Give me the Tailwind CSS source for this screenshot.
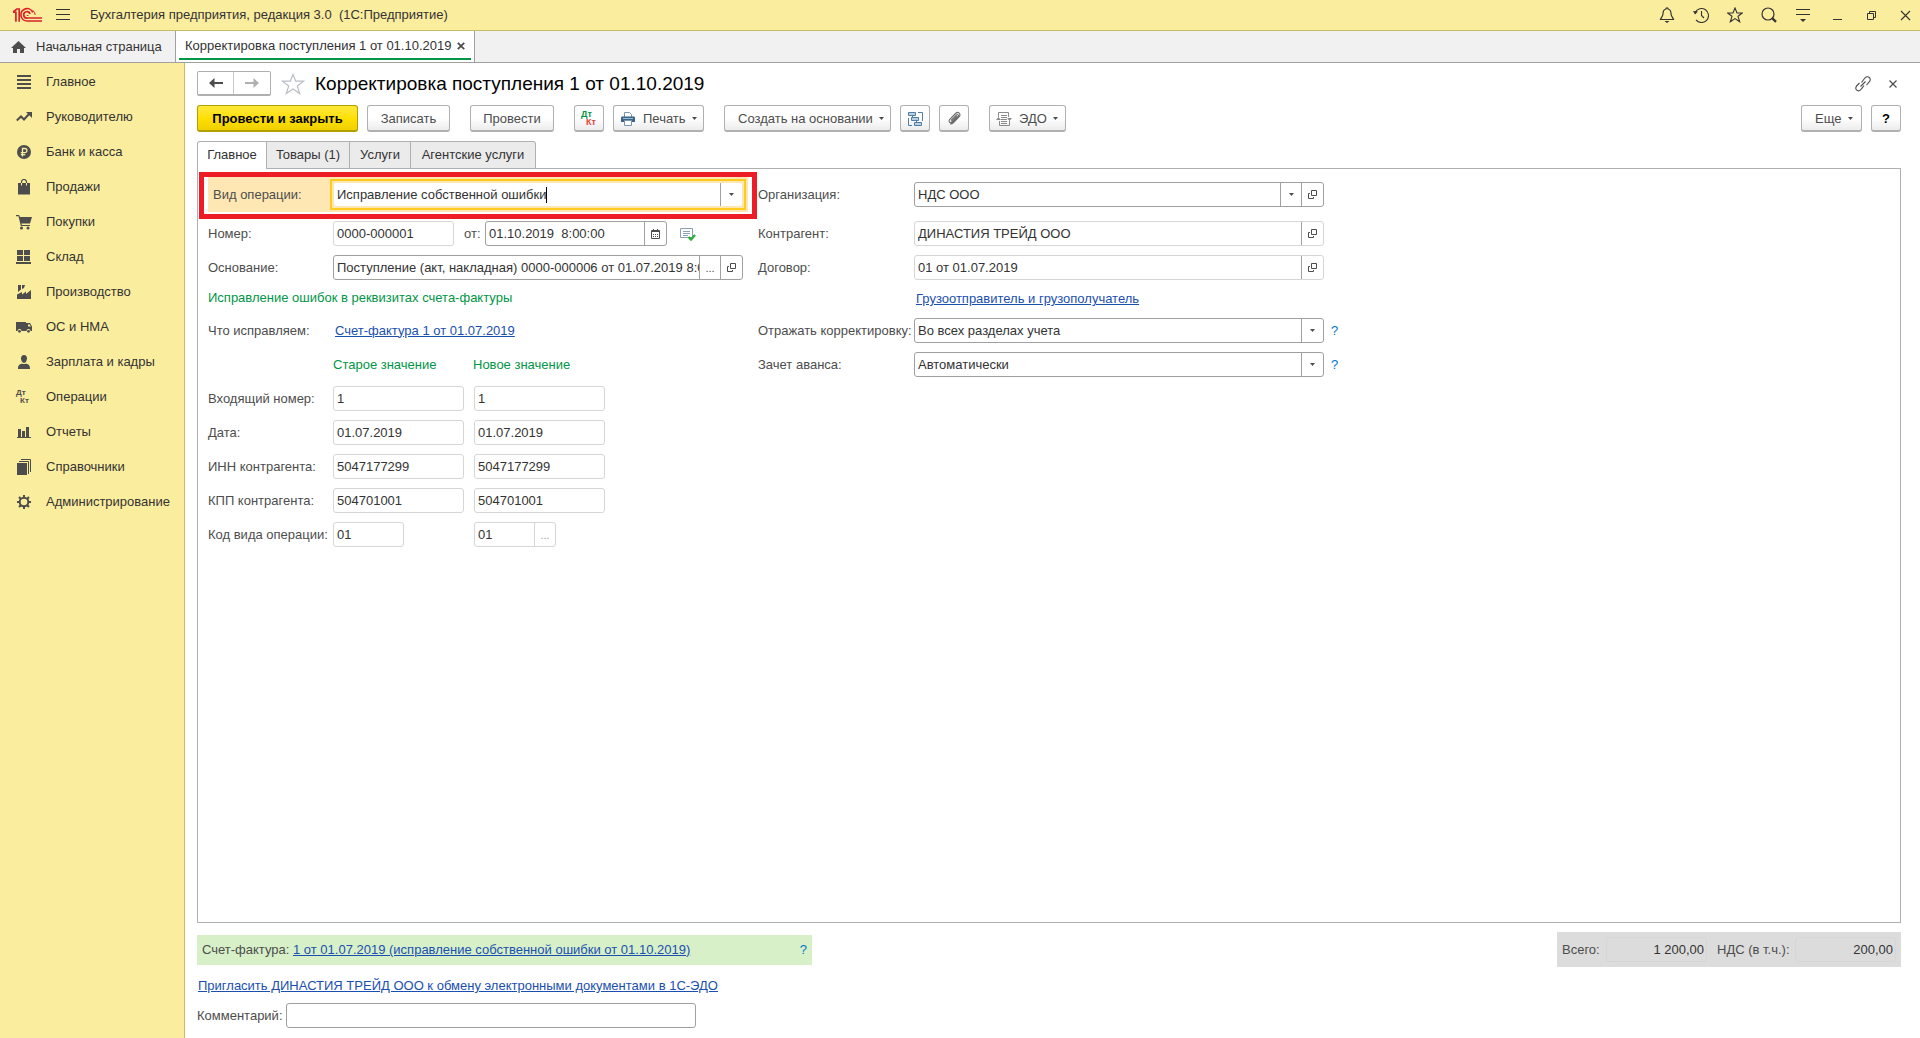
<!DOCTYPE html>
<html lang="ru">
<head>
    <meta charset="UTF-8">
    <meta name="viewport" content="width=device-width, initial-scale=1.0">
    <title>Корректировка поступления 1 от 01.10.2019</title>
    <script src="https://cdn.jsdelivr.net/npm/@tailwindcss/browser@4"></script>
</head>
<body class="flex flex-col min-h-screen bg-white text-[13px] leading-4 text-[#333333] font-['Liberation_Sans',Arial,sans-serif]">

    <!-- Title bar -->
    <header class="flex items-center h-[31px] pl-3 pr-[3px] bg-[#fbed9e] border-b border-[#c8bb62]">
        <svg class="w-[30px] h-4" viewBox="0 0 30 16" fill="none" stroke="#d8232a" stroke-width="1.7">
            <path d="M1 5.2h2.4M3.9 4.4v10.400M1.200 5l3.600-3h2.400v12.800"/>
            <path d="M20.8 5.4A6.2 6.2 0 1 0 15.5 14H30"/>
            <path d="M18 7A3.2 3.2 0 1 0 15.5 11H30"/>
            <path d="M16.5 8.4h-1.8M23.2 8A7.8 7.8 0 0 0 21 3.4" stroke-width="1"/>
        </svg>
        <button class="ml-[14px]" aria-label="Меню">
            <svg class="w-[14px] h-3" viewBox="0 0 14 12" stroke="#333" fill="none"><path d="M0 .5h14M0 5.5h14M0 10.5h14"/></svg>
        </button>
        <h1 class="ml-5 flex-1 whitespace-pre">Бухгалтерия предприятия, редакция 3.0  (1С:Предприятие)</h1>
        <div class="flex gap-[10px]">
            <button class="w-6 h-6 flex items-center justify-center" aria-label="Уведомления">
                <svg class="size-4" viewBox="0 0 16 16" fill="none" stroke="#333" stroke-width="1.2"><path d="M8 .8c-.8 0-1.1.5-1.1 1.2C4.7 2.6 4 4.3 4 6.5 4 9.5 2.3 10 1.5 12.5h13C13.700 10 12 9.5 12 6.5 12 4.3 11.3 2.6 9.1 2 9.1 1.3 8.8.8 8 .8z"/><path d="M5.5 14h5L8 16z" fill="#333" stroke="none"/></svg>
            </button>
            <button class="w-6 h-6 flex items-center justify-center" aria-label="История">
                <svg class="size-4" viewBox="0 0 16 16" fill="none" stroke="#333" stroke-width="1.1"><path d="M2.2 5.5A7 7 0 1 1 3 12.8M8.5 4v4.5L11 11"/><path d="M0 4l5 .5-3 3z" fill="#333" stroke="none"/></svg>
            </button>
            <button class="w-6 h-6 flex items-center justify-center" aria-label="Избранное">
                <svg class="size-4" viewBox="0 0 16 16" fill="none" stroke="#333" stroke-width="1.1"><path d="M8 1l2 5h5.3L11 9.3l1.7 5.5L8 11.6l-4.7 3.2L5 9.3.7 6H6z"/></svg>
            </button>
            <button class="w-6 h-6 flex items-center justify-center" aria-label="Поиск">
                <svg class="size-4" viewBox="0 0 16 16" fill="none" stroke="#333" stroke-width="1.2"><circle cx="7" cy="7" r="6"/><path d="M11 11l4 3.8" stroke-width="2.4"/></svg>
            </button>
            <button class="w-6 h-6 flex items-center justify-center" aria-label="Сервис">
                <svg class="size-4" viewBox="0 0 16 16" fill="none" stroke="#333"><path d="M1 2.5h14M1 7.5h14"/><path d="M5 12h6l-3 3z" fill="#333" stroke="none"/></svg>
            </button>
            <button class="w-6 h-6 flex items-center justify-center" aria-label="Свернуть">
                <svg class="size-4" viewBox="0 0 16 16" stroke="#333"><path d="M4 12.5h9"/></svg>
            </button>
            <button class="w-6 h-6 flex items-center justify-center" aria-label="Развернуть">
                <svg class="size-4" viewBox="0 0 16 16" fill="none" stroke="#333"><path d="M4.5 6.500h6v6h-6zM6.500 6.500v-2h6v6h-2"/></svg>
            </button>
            <button class="w-6 h-6 flex items-center justify-center" aria-label="Закрыть">
                <svg class="size-4" viewBox="0 0 16 16" stroke="#333" stroke-width="1.1"><path d="M4 4l9 9M13 4l-9 9"/></svg>
            </button>
        </div>
    </header>

    <!-- Open windows -->
    <nav class="flex h-8 bg-[#f1f1f1] border-b border-[#a0a0a0]">
        <a href="#" class="flex items-center w-[175px] pl-[11px] gap-[10px]">
            <svg class="w-[15px] h-3" viewBox="0 0 15 12" fill="#4d4d4d"><path d="M7.5 0L15 7h-2v5H9V8H6v4H2V7H0z"/></svg>
            Начальная страница
        </a>
        <div class="flex items-stretch px-[3px] bg-white border-x border-[#a0a0a0]">
            <div class="flex items-center gap-[6px] px-[6px] pt-[3px] mb-[2px] border-b-2 border-[#009646]">
                <a href="#">Корректировка поступления 1 от 01.10.2019</a>
                <button aria-label="Закрыть вкладку">
                    <svg class="size-2" viewBox="0 0 8 8" stroke="#4d4d4d" stroke-width="1.8"><path d="M.8.8l6.4 6.4M7.2.8L.8 7.2"/></svg>
                </button>
            </div>
        </div>
    </nav>

    <div class="flex flex-1">
        <!-- Sections -->
        <aside class="w-[185px] shrink-0 pt-px bg-[#fbed9e] border-r border-[#c8bb62]">
            <a href="#" class="flex items-center h-[35px] pl-4 gap-[14px]">
                <svg class="size-4" viewBox="0 0 16 16" fill="#4d4d4d"><path d="M1 1h14v2H1zM1 5h14v2H1zM1 9h14v2H1zM1 13h14v2H1z"/></svg>
                Главное
            </a>
            <a href="#" class="flex items-center h-[35px] pl-4 gap-[14px]">
                <svg class="size-4" viewBox="0 0 16 16" fill="none" stroke="#4d4d4d" stroke-width="2"><path d="M.8 11.5L5 7.5l3 3L13 5"/><path d="M10 3h6v6z" fill="#4d4d4d" stroke="none"/></svg>
                Руководителю
            </a>
            <a href="#" class="flex items-center h-[35px] pl-4 gap-[14px]">
                <svg class="size-4" viewBox="0 0 16 16"><circle cx="8" cy="8" r="7" fill="#4d4d4d"/><path d="M6.5 12.5v-8h2.3a2 2 0 0 1 0 4.2h-4M4.8 10.7h4.5" fill="none" stroke="#fbed9e" stroke-width="1.3"/></svg>
                Банк и касса
            </a>
            <a href="#" class="flex items-center h-[35px] pl-4 gap-[14px]">
                <svg class="size-4" viewBox="0 0 16 16"><path d="M2 4h12v11.5H2z" fill="#4d4d4d"/><path d="M5.5 4V3a2.5 2.5 0 0 1 5 0v1" fill="none" stroke="#4d4d4d" stroke-width="1.2"/><path d="M5.5 4v2.5M10.5 4v2.5" stroke="#fbed9e"/></svg>
                Продажи
            </a>
            <a href="#" class="flex items-center h-[35px] pl-4 gap-[14px]">
                <svg class="size-4" viewBox="0 0 16 16" fill="#4d4d4d"><path d="M0 1h3l1 2h12l-2 6.500H5.500l.3 1.500H14v1H4.800L2.500 2.300H0z"/><circle cx="5.5" cy="14" r="1.5"/><circle cx="12" cy="14" r="1.5"/></svg>
                Покупки
            </a>
            <a href="#" class="flex items-center h-[35px] pl-4 gap-[14px]">
                <svg class="size-4" viewBox="0 0 16 16" fill="#4d4d4d"><path d="M1 1h6v5H1zM8 1h6v5H8zM1 7h6v5H1zM8 7h6v5H8zM0 13h15v2H0z"/></svg>
                Склад
            </a>
            <a href="#" class="flex items-center h-[35px] pl-4 gap-[14px]">
                <svg class="size-4" viewBox="0 0 16 16" fill="#4d4d4d"><path d="M1 15v-4.500L6 8v2.500l4-3V10l5-4v9zM2 1h3v4.500L2 8zM6 1h3L8 4 6 5z"/></svg>
                Производство
            </a>
            <a href="#" class="flex items-center h-[35px] pl-4 gap-[14px]">
                <svg class="size-4" viewBox="0 0 16 16" fill="#4d4d4d"><path fill-rule="evenodd" d="M0 3h10v9H0zM10 4h4l2 3.500V12h-6zM12 5.500v2h2.800l-1-2z"/><path d="M1.500 12a2 2 0 0 1 4 0M10.500 12a2 2 0 0 1 4 0" fill="#fbed9e"/><circle cx="3.5" cy="12.3" r="1.4"/><circle cx="12.5" cy="12.3" r="1.4"/></svg>
                ОС и НМА
            </a>
            <a href="#" class="flex items-center h-[35px] pl-4 gap-[14px]">
                <svg class="size-4" viewBox="0 0 16 16" fill="#4d4d4d"><path d="M8 1c2 0 3 1.500 3 3.500S9.700 9 8 9 5 6.500 5 4.500 6 1 8 1z"/><path d="M2 15c0-3.500 1-4.500 4-5.500.6.800 3.400.8 4 0 3 1 4 2 4 5.500z"/></svg>
                Зарплата и кадры
            </a>
            <a href="#" class="flex items-center h-[35px] pl-4 gap-[14px]">
                <span class="flex flex-col w-4 text-[8px] leading-2 font-bold text-[#4d4d4d]"><span>Дт</span><span class="pl-1">Кт</span></span>
                Операции
            </a>
            <a href="#" class="flex items-center h-[35px] pl-4 gap-[14px]">
                <svg class="size-4" viewBox="0 0 16 16" fill="#4d4d4d"><path d="M1 13h14v1H1zM2 5h3v8H2zM6 7h3v6H6zM10 3h3v10h-3z"/></svg>
                Отчеты
            </a>
            <a href="#" class="flex items-center h-[35px] pl-4 gap-[14px]">
                <svg class="size-4" viewBox="0 0 16 16" fill="#4d4d4d"><path d="M1 4h10v12H1z"/><path d="M3 2.500h9.500V15M5 .5h9.500V13" fill="none" stroke="#4d4d4d"/></svg>
                Справочники
            </a>
            <a href="#" class="flex items-center h-[35px] pl-4 gap-[14px]">
                <svg class="size-4" viewBox="0 0 16 16" fill="none" stroke="#4d4d4d" stroke-width="2"><circle cx="8" cy="8" r="4.3"/><path d="M8 1v3M8 12v3M1 8h3M12 8h3M3 3l2 2M11 11l2 2M13 3l-2 2M5 11l-2 2"/></svg>
                Администрирование
            </a>
        </aside>

        <main class="flex flex-col flex-1 min-w-0 pt-2 pb-[10px] pl-3 pr-[19px]">
            <!-- Document title -->
            <div class="flex items-center h-[25px]">
                <div class="flex h-[25px] border border-[#b0b0b0] border-b-2 rounded-[2px]">
                    <button class="flex items-center justify-center w-9 border-r border-[#c8c8c8]" aria-label="Назад">
                        <svg class="w-[14px] h-[10px]" viewBox="0 0 14 10" fill="#4d4d4d"><path d="M0 5l5.500-5v4H14v2H5.500v4z"/></svg>
                    </button>
                    <button class="flex items-center justify-center w-9" aria-label="Вперед">
                        <svg class="w-[14px] h-[10px]" viewBox="0 0 14 10" fill="#b0b0b0"><path d="M14 5L8.500 0v4H0v2h8.500v4z"/></svg>
                    </button>
                </div>
                <button class="ml-[10px]" aria-label="В избранное">
                    <svg class="w-6 h-[22px]" viewBox="0 0 24 22" fill="#fff" stroke="#b8bec6" stroke-width="1.2"><path d="M12 1.500l2.700 6.700h7.800l-6.200 4.700 2.400 7.600L12 16l-6.700 4.500 2.400-7.600L1.500 8.200h7.800z"/></svg>
                </button>
                <h2 class="ml-[10px] flex-1 text-[19px] leading-6 text-black">Корректировка поступления 1 от 01.10.2019</h2>
                <button class="mr-[18px]" aria-label="Ссылка">
                    <svg class="size-4" viewBox="0 0 16 16" fill="none" stroke="#4d4d4d" stroke-width="1.1"><path d="M6.500 6.500l3-4C11 .5 13 .3 14.300 1.500s1.300 3.200-.3 4.700L11.500 9M9 9.500l-2.500 3.300C5 15 3 15.300 1.700 14.200S.5 11 2 9.500L4.500 7M5.500 10.500l5-5"/></svg>
                </button>
                <button class="mr-1" aria-label="Закрыть">
                    <svg class="size-2" viewBox="0 0 8 8" stroke="#4d4d4d" stroke-width="1.2"><path d="M.5.5l7 7M7.500.5l-7 7"/></svg>
                </button>
            </div>

            <!-- Commands -->
            <div class="flex h-[27px] mt-[9px] text-[#4d4d4d]">
                <button class="w-[161px] pt-px border border-b-2 border-[#b39f00] rounded-[3px] bg-linear-to-b from-[#ffe838] via-[#ffe000] to-[#f0d000] font-bold text-black">Провести и закрыть</button>
                <button class="w-[83px] ml-[9px] pt-px border border-b-2 border-[#b0b0b0] rounded-[3px] bg-linear-to-b from-white from-50% to-[#ececec]">Записать</button>
                <button class="w-[84px] ml-5 pt-px border border-b-2 border-[#b0b0b0] rounded-[3px] bg-linear-to-b from-white from-50% to-[#ececec]">Провести</button>
                <button class="flex flex-col justify-center w-[30px] ml-5 pl-[6px] border border-b-2 border-[#b0b0b0] rounded-[3px] bg-linear-to-b from-white from-50% to-[#ececec] text-[9px] leading-2 text-left font-bold" aria-label="Дт Кт">
                    <span class="text-[#009646]">Дт</span><span class="pl-[5px] text-[#e0453c]">Кт</span>
                </button>
                <button class="flex items-center w-[91px] ml-[9px] pt-px pl-[7px] border border-b-2 border-[#b0b0b0] rounded-[3px] bg-linear-to-b from-white from-50% to-[#ececec]">
                    <svg class="w-[14px] h-[14px]" viewBox="0 0 14 14"><path d="M3.500 5V.5h5l2 2V5" fill="#fff" stroke="#7a96ad"/><path d="M0 5.500Q0 4.500 1 4.500h12q1 0 1 1V10H0z" fill="#3a6489"/><path d="M3.500 8.500h7v5h-7z" fill="#fff" stroke="#7a96ad"/><path d="M2 6.500h10" stroke="#9db8cf"/></svg>
                    <span class="ml-2">Печать</span>
                    <svg class="w-[5px] h-[3px] ml-[6px]" viewBox="0 0 5 3" fill="#4d4d4d"><path d="M0 0h5L2.500 3z"/></svg>
                </button>
                <button class="flex items-center w-[167px] ml-5 pt-px pl-[13px] border border-b-2 border-[#b0b0b0] rounded-[3px] bg-linear-to-b from-white from-50% to-[#ececec]">
                    Создать на основании
                    <svg class="w-[5px] h-[3px] ml-[6px]" viewBox="0 0 5 3" fill="#4d4d4d"><path d="M0 0h5L2.500 3z"/></svg>
                </button>
                <button class="flex items-center justify-center w-[30px] ml-[9px] border border-b-2 border-[#b0b0b0] rounded-[3px] bg-linear-to-b from-white from-50% to-[#ececec]" aria-label="Связанные документы">
                    <svg class="w-[15px] h-[15px]" viewBox="0 0 15 15" fill="#b9d0e3" stroke="#4f7ea6"><path d="M.5 1.500h7v3h-7zM3.500 6.500h7v3h-7zM6.500 11.500h7v3h-7z"/><path d="M10 1.500h4.500V10M.5 7v7.500H4M4.500 5v1M8.500 10v1" fill="none"/></svg>
                </button>
                <button class="flex items-center justify-center w-[30px] ml-[9px] border border-b-2 border-[#b0b0b0] rounded-[3px] bg-linear-to-b from-white from-50% to-[#ececec]" aria-label="Присоединенные файлы">
                    <svg class="w-[14px] h-[14px]" viewBox="0 0 14 14" fill="none" stroke="#6b6b6b" stroke-width="1.1"><path d="M4 9.500L9.500 4c1.200-1.200 2.600.2 1.500 1.400L5.500 11C3.500 13 .8 10.500 2.800 8.400L8.500 2.500c2.700-2.600 6 .5 3.500 3.300L6.500 11.500c-1 1-2 1.600-3.200 1.500M4.500 11L10 5.400"/></svg>
                </button>
                <button class="flex items-center w-[77px] ml-5 pt-px pl-[6px] border border-b-2 border-[#b0b0b0] rounded-[3px] bg-linear-to-b from-white from-50% to-[#ececec]">
                    <svg class="w-4 h-[14px]" viewBox="0 0 16 14" fill="none" stroke="#8a8a8a"><path d="M2.500 5V.5h10V5M3.500 9v4.500h10V9M5 3.500h6M5 5.500h6M5 7.500h6M5 9.500h6M5 11.500h6"/><path d="M0 8l2.500-3L5 8zM11 6h5l-2.500 3z" fill="#8a8a8a" stroke="none"/></svg>
                    <span class="ml-[7px]">ЭДО</span>
                    <svg class="w-[5px] h-[3px] ml-[6px]" viewBox="0 0 5 3" fill="#4d4d4d"><path d="M0 0h5L2.500 3z"/></svg>
                </button>
                <button class="flex items-center w-[61px] ml-auto pt-px pl-[13px] border border-b-2 border-[#b0b0b0] rounded-[3px] bg-linear-to-b from-white from-50% to-[#ececec]">
                    Еще
                    <svg class="w-[5px] h-[3px] ml-[7px]" viewBox="0 0 5 3" fill="#4d4d4d"><path d="M0 0h5L2.500 3z"/></svg>
                </button>
                <button class="w-[30px] ml-[9px] pt-px border border-b-2 border-[#b0b0b0] rounded-[3px] bg-linear-to-b from-white from-50% to-[#ececec] font-bold text-black">?</button>
            </div>

            <!-- Tabs -->
            <div class="relative z-10 flex h-7 mt-[9px] -mb-px" role="tablist">
                <button role="tab" aria-selected="true" class="w-[70px] pb-px border border-b-0 border-[#b0b0b0] rounded-tl-[3px] bg-white">Главное</button>
                <button role="tab" class="w-[83px] border border-l-0 border-[#b0b0b0] bg-[#ebebeb]">Товары (1)</button>
                <button role="tab" class="w-[61px] border border-l-0 border-[#b0b0b0] bg-[#ebebeb]">Услуги</button>
                <button role="tab" class="w-[125px] border border-l-0 border-[#b0b0b0] rounded-tr-[3px] bg-[#ebebeb]">Агентские услуги</button>
            </div>

            <section class="relative flex flex-1 items-start pt-2 pl-[10px] border border-[#b0b0b0]">
                <!-- Highlight frame around the operation type -->
                <div class="absolute left-px top-[3px] w-[558px] h-[47px] border-[5px] border-[#ee1c24] pointer-events-none"></div>

                <div class="flex flex-col gap-[9px] w-[540px]">
                    <div class="flex items-center h-[35px] pl-[5px] pr-[2px] bg-[#ffe7b3]">
                        <label for="op-kind" class="w-[117px] text-[#4d4d4d]">Вид операции:</label>
                        <div class="flex flex-1 h-[31px] p-[2px] border-2 border-[#ffcb1f]">
                            <div class="flex flex-1 items-center pl-[3px] bg-white rounded-[2px]">
                                <input id="op-kind" type="text" value="Исправление собственной ошибки" class="field-sizing-content outline-none">
                                <span class="w-px h-4 bg-black"></span>
                                <button class="flex items-center justify-center w-[22px] h-full ml-auto border-l border-[#a0a0a0]" aria-label="Выбрать">
                                    <svg class="w-[5px] h-[3px]" viewBox="0 0 5 3" fill="#4d4d4d"><path d="M0 0h5L2.500 3z"/></svg>
                                </button>
                            </div>
                        </div>
                    </div>
                    <div class="flex items-center h-[25px]">
                        <label for="number" class="w-[125px] text-[#4d4d4d]">Номер:</label>
                        <input id="number" type="text" value="0000-000001" class="w-[121px] h-full px-[3px] border border-[#d6d6d6] rounded-[3px]">
                        <label for="date" class="w-[31px] pl-[10px] text-[#4d4d4d]">от:</label>
                        <div class="flex w-[182px] h-full border border-[#a0a0a0] rounded-[3px]">
                            <input id="date" type="text" value="01.10.2019  8:00:00" class="flex-1 min-w-0 px-[3px]">
                            <button class="flex items-center justify-center w-[22px] border-l border-[#a0a0a0]" aria-label="Календарь">
                                <svg class="w-[9px] h-[10px]" viewBox="0 0 9 10"><path d="M.5 1.500h8v8h-8zM.5 2.500h8M2.500 0v2M6.500 0v2" fill="none" stroke="#4d4d4d"/><path d="M2 5.500h5M2 7.500h5" stroke="#4d4d4d" stroke-dasharray="1 1"/></svg>
                            </button>
                        </div>
                        <svg class="w-4 h-[14px] ml-[13px]" viewBox="0 0 16 14" fill="none"><path d="M.5 1.500h12v9H.5z" fill="#fff" stroke="#8aa0b4"/><path d="M3 4.500h7M3 6.500h7M3 8.500h5" stroke="#8aa0b4"/><path d="M8.500 10l2.500 2.500L15 8" stroke="#2fae3b" stroke-width="2.4"/></svg>
                    </div>
                    <div class="flex items-center h-[25px]">
                        <label for="basis" class="w-[125px] text-[#4d4d4d]">Основание:</label>
                        <div class="flex w-[410px] h-full border border-[#a0a0a0] rounded-[3px]">
                            <input id="basis" type="text" value="Поступление (акт, накладная) 0000-000006 от 01.07.2019 8:00:00" class="flex-1 min-w-0 ml-[3px]">
                            <button class="w-[21px] border-l border-[#a0a0a0] text-[11px] text-[#4d4d4d]">...</button>
                            <button class="flex items-center justify-center w-[22px] border-l border-[#a0a0a0]" aria-label="Открыть">
                                <svg class="w-[9px] h-[9px]" viewBox="0 0 9 9" fill="none" stroke="#4d4d4d"><path d="M3.500.5h5v5h-5zM2 3.500H.5v5h5V7"/></svg>
                            </button>
                        </div>
                    </div>
                    <p class="flex items-center h-5 pb-[2px] text-[#009646]">Исправление ошибок в реквизитах счета-фактуры</p>
                    <div class="flex items-center h-[25px]">
                        <span class="w-[127px] text-[#4d4d4d]">Что исправляем:</span>
                        <a href="#" class="text-[#1a4fb0] underline">Счет-фактура 1 от 01.07.2019</a>
                    </div>
                    <div class="flex items-center h-[25px] pl-[125px] text-[#009646]">
                        <span class="w-[140px]">Старое значение</span>
                        <span>Новое значение</span>
                    </div>
                    <div class="flex items-center h-[25px]">
                        <label for="in-old" class="w-[125px] text-[#4d4d4d]">Входящий номер:</label>
                        <input id="in-old" type="text" value="1" class="w-[131px] h-full px-[3px] border border-[#d6d6d6] rounded-[3px]">
                        <input type="text" value="1" aria-label="Новый входящий номер" class="w-[131px] h-full ml-[10px] px-[3px] border border-[#d6d6d6] rounded-[3px]">
                    </div>
                    <div class="flex items-center h-[25px]">
                        <label for="date-old" class="w-[125px] text-[#4d4d4d]">Дата:</label>
                        <input id="date-old" type="text" value="01.07.2019" class="w-[131px] h-full px-[3px] border border-[#d6d6d6] rounded-[3px]">
                        <input type="text" value="01.07.2019" aria-label="Новая дата" class="w-[131px] h-full ml-[10px] px-[3px] border border-[#d6d6d6] rounded-[3px]">
                    </div>
                    <div class="flex items-center h-[25px]">
                        <label for="inn-old" class="w-[125px] text-[#4d4d4d]">ИНН контрагента:</label>
                        <input id="inn-old" type="text" value="5047177299" class="w-[131px] h-full px-[3px] border border-[#d6d6d6] rounded-[3px]">
                        <input type="text" value="5047177299" aria-label="Новый ИНН" class="w-[131px] h-full ml-[10px] px-[3px] border border-[#d6d6d6] rounded-[3px]">
                    </div>
                    <div class="flex items-center h-[25px]">
                        <label for="kpp-old" class="w-[125px] text-[#4d4d4d]">КПП контрагента:</label>
                        <input id="kpp-old" type="text" value="504701001" class="w-[131px] h-full px-[3px] border border-[#d6d6d6] rounded-[3px]">
                        <input type="text" value="504701001" aria-label="Новый КПП" class="w-[131px] h-full ml-[10px] px-[3px] border border-[#d6d6d6] rounded-[3px]">
                    </div>
                    <div class="flex items-center h-[25px]">
                        <label for="code-old" class="w-[125px] whitespace-nowrap text-[#4d4d4d]">Код вида операции:</label>
                        <input id="code-old" type="text" value="01" class="w-[71px] h-full px-[3px] border border-[#d6d6d6] rounded-[3px]">
                        <div class="flex w-[82px] h-full ml-[70px] border border-[#d6d6d6] rounded-[3px]">
                            <input type="text" value="01" aria-label="Новый код вида операции" class="flex-1 min-w-0 px-[3px]">
                            <button class="w-[21px] border-l border-[#d6d6d6] text-[11px] text-[#a0a0a0]">...</button>
                        </div>
                    </div>
                </div>

                <div class="flex flex-col gap-[9px] ml-[10px]">
                    <div class="flex items-center h-[35px]">
                        <label for="org" class="w-[156px] text-[#4d4d4d]">Организация:</label>
                        <div class="flex w-[410px] h-[25px] border border-[#a0a0a0] rounded-[3px]">
                            <div class="grid flex-1">
                                <select id="org" class="col-start-1 row-start-1 appearance-none px-[3px]"><option>НДС ООО</option></select>
                                <span class="col-start-1 row-start-1 flex items-center justify-center w-[21px] justify-self-end border-l border-[#a0a0a0] pointer-events-none">
                                    <svg class="w-[5px] h-[3px]" viewBox="0 0 5 3" fill="#4d4d4d"><path d="M0 0h5L2.500 3z"/></svg>
                                </span>
                            </div>
                            <button class="flex items-center justify-center w-[22px] border-l border-[#a0a0a0]" aria-label="Открыть">
                                <svg class="w-[9px] h-[9px]" viewBox="0 0 9 9" fill="none" stroke="#4d4d4d"><path d="M3.500.5h5v5h-5zM2 3.500H.5v5h5V7"/></svg>
                            </button>
                        </div>
                    </div>
                    <div class="flex items-center h-[25px]">
                        <label for="partner" class="w-[156px] text-[#4d4d4d]">Контрагент:</label>
                        <div class="flex w-[410px] h-full border border-[#d6d6d6] rounded-[3px]">
                            <input id="partner" type="text" value="ДИНАСТИЯ ТРЕЙД ООО" class="flex-1 min-w-0 px-[3px]">
                            <button class="flex items-center justify-center w-[22px] border-l border-[#a0a0a0]" aria-label="Открыть">
                                <svg class="w-[9px] h-[9px]" viewBox="0 0 9 9" fill="none" stroke="#4d4d4d"><path d="M3.500.5h5v5h-5zM2 3.500H.5v5h5V7"/></svg>
                            </button>
                        </div>
                    </div>
                    <div class="flex items-center h-[25px]">
                        <label for="contract" class="w-[156px] text-[#4d4d4d]">Договор:</label>
                        <div class="flex w-[410px] h-full border border-[#d6d6d6] rounded-[3px]">
                            <input id="contract" type="text" value="01 от 01.07.2019" class="flex-1 min-w-0 px-[3px]">
                            <button class="flex items-center justify-center w-[22px] border-l border-[#a0a0a0]" aria-label="Открыть">
                                <svg class="w-[9px] h-[9px]" viewBox="0 0 9 9" fill="none" stroke="#4d4d4d"><path d="M3.500.5h5v5h-5zM2 3.500H.5v5h5V7"/></svg>
                            </button>
                        </div>
                    </div>
                    <div class="flex items-center h-5 pl-[158px]">
                        <a href="#" class="text-[#1a4fb0] underline">Грузоотправитель и грузополучатель</a>
                    </div>
                    <div class="flex items-center h-[25px]">
                        <label for="reflect" class="w-[156px] whitespace-nowrap text-[#4d4d4d]">Отражать корректировку:</label>
                        <div class="grid w-[410px] h-full border border-[#a0a0a0] rounded-[3px]">
                            <select id="reflect" class="col-start-1 row-start-1 appearance-none px-[3px]"><option>Во всех разделах учета</option></select>
                            <span class="col-start-1 row-start-1 flex items-center justify-center w-[22px] justify-self-end border-l border-[#a0a0a0] pointer-events-none">
                                <svg class="w-[5px] h-[3px]" viewBox="0 0 5 3" fill="#4d4d4d"><path d="M0 0h5L2.500 3z"/></svg>
                            </span>
                        </div>
                        <button class="ml-[7px] text-[#0078c8]">?</button>
                    </div>
                    <div class="flex items-center h-[25px]">
                        <label for="advance" class="w-[156px] text-[#4d4d4d]">Зачет аванса:</label>
                        <div class="grid w-[410px] h-full border border-[#a0a0a0] rounded-[3px]">
                            <select id="advance" class="col-start-1 row-start-1 appearance-none px-[3px]"><option>Автоматически</option></select>
                            <span class="col-start-1 row-start-1 flex items-center justify-center w-[22px] justify-self-end border-l border-[#a0a0a0] pointer-events-none">
                                <svg class="w-[5px] h-[3px]" viewBox="0 0 5 3" fill="#4d4d4d"><path d="M0 0h5L2.500 3z"/></svg>
                            </span>
                        </div>
                        <button class="ml-[7px] text-[#0078c8]">?</button>
                    </div>
                </div>
            </section>

            <!-- Invoice and totals -->
            <footer class="mt-[9px] text-[#4d4d4d]">
                <div class="flex items-center justify-between h-[35px]">
                    <div class="flex items-center w-[615px] h-[30px] px-[5px] bg-[#d7f0c8]">
                        <span class="w-[91px]">Счет-фактура:</span>
                        <a href="#" class="text-[#1a4fb0] underline">1 от 01.07.2019 (исправление собственной ошибки от 01.10.2019)</a>
                        <button class="ml-auto text-[#0078c8]">?</button>
                    </div>
                    <div class="flex items-center h-full px-[5px] bg-[#dcdcdc]">
                        <label for="total" class="w-11">Всего:</label>
                        <input id="total" type="text" readonly value="1 200,00" class="w-[101px] h-[25px] px-[2px] border border-[#d6d6d6] rounded-[3px] text-right text-[#333333]">
                        <label for="vat" class="w-[88px] pl-[10px] whitespace-nowrap">НДС (в т.ч.):</label>
                        <input id="vat" type="text" readonly value="200,00" class="w-[101px] h-[25px] px-[2px] border border-[#d6d6d6] rounded-[3px] text-right text-[#333333]">
                    </div>
                </div>
                <div class="flex items-center h-9 pt-[2px] pl-px">
                    <a href="#" class="text-[#1a4fb0] underline">Пригласить ДИНАСТИЯ ТРЕЙД ООО к обмену электронными документами в 1С-ЭДО</a>
                </div>
                <div class="flex items-center">
                    <label for="comment" class="w-[89px]">Комментарий:</label>
                    <input id="comment" type="text" class="w-[410px] h-[25px] px-[3px] border border-[#a0a0a0] rounded-[3px]">
                </div>
            </footer>
        </main>
    </div>
</body>
</html>
